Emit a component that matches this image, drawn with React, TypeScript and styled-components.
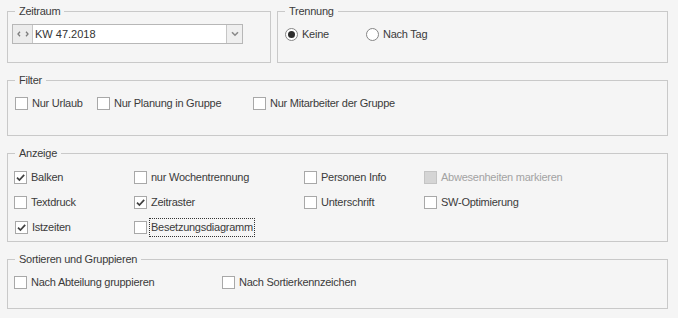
import React from "react";
import styled, { createGlobalStyle } from "styled-components";

const GlobalStyle = createGlobalStyle`
  html, body {
    margin: 0;
    background: #f5f5f5;
  }
  body {
    font-family: "Liberation Sans", Arial, sans-serif;
    font-size: 11px;
    color: #3b3b3b;
  }
`;

const Page = styled.div`
  width: 678px;
  height: 318px;
  box-sizing: border-box;
  padding: 5px 10px 0 7px;
  display: flex;
  flex-direction: column;
  gap: 11px;
`;

const TopRow = styled.div`
  display: grid;
  grid-template-columns: 264px 1fr;
  gap: 6px;
`;

const Group = styled.fieldset<{ $height: number }>`
  margin: 0;
  padding: 0;
  min-width: 0;
  border: 1px solid #c9c9c9;
  box-sizing: border-box;
  height: ${(p) => p.$height}px;
`;

const GroupTitle = styled.legend`
  margin-left: 7px;
  padding: 0 4px;
  line-height: 13px;
  font-size: 11px;
  color: #3b3b3b;
  letter-spacing: -0.25px;
`;

const GroupBody = styled.div<{ $left: number; $top: number }>`
  padding: ${(p) => p.$top}px 0 0 ${(p) => p.$left}px;
`;

const OptionGrid = styled.div<{ $columns: string }>`
  display: grid;
  grid-template-columns: ${(p) => p.$columns};
  row-gap: 5px;
`;

const Option = styled.label<{ $nudge?: number }>`
  display: flex;
  align-items: center;
  gap: 2px;
  height: 20px;
  padding-left: ${(p) => p.$nudge ?? 0}px;
`;

const Box = styled.span<{ $disabled?: boolean }>`
  flex: none;
  width: 13px;
  height: 13px;
  box-sizing: border-box;
  border: 1px solid ${(p) => (p.$disabled ? "#c4c4c4" : "#a8a8a8")};
  background: ${(p) => (p.$disabled ? "#d5d5d5" : "#ffffff")};
  display: flex;
  align-items: center;
  justify-content: center;
`;

const RadioCircle = styled.span<{ $checked?: boolean }>`
  flex: none;
  width: 13px;
  height: 13px;
  box-sizing: border-box;
  border-radius: 50%;
  border: 1px solid #858585;
  background: #ffffff;
  display: flex;
  align-items: center;
  justify-content: center;

  &::after {
    content: "";
    width: 7px;
    height: 7px;
    border-radius: 50%;
    background: ${(p) => (p.$checked ? "#2e2e2e" : "transparent")};
  }
`;

const Caption = styled.span<{ $focused?: boolean; $disabled?: boolean }>`
  border: 1px ${(p) => (p.$focused ? "dotted #333" : "solid transparent")};
  padding: 0 1px;
  line-height: 17px;
  letter-spacing: -0.25px;
  white-space: nowrap;
  color: ${(p) => (p.$disabled ? "#a3a3a3" : "#3b3b3b")};
`;

const Combo = styled.div`
  display: flex;
  width: 231px;
  height: 20px;
  box-sizing: border-box;
  border: 1px solid #b7b7b7;
  background: #ffffff;
`;

const SpinButtons = styled.div`
  width: 20px;
  box-sizing: border-box;
  background: #ececec;
  border-right: 1px solid #c6c6c6;
  display: flex;
  align-items: center;
  justify-content: center;
`;

const ComboText = styled.div`
  flex: 1;
  padding-left: 2px;
  line-height: 18px;
  font-size: 11px;
  color: #333;
`;

const DropButton = styled.div`
  width: 16px;
  box-sizing: border-box;
  background: #efefef;
  border-left: 1px solid #c6c6c6;
  display: flex;
  align-items: center;
  justify-content: center;
`;

const Check = () => (
  <svg width="11" height="11" viewBox="0 0 11 11">
    <path d="M2 5.6 L4.4 8 L9.2 2.8" fill="none" stroke="#404040" strokeWidth="1.7" />
  </svg>
);

type CheckOptionProps = {
  label: string;
  checked?: boolean;
  disabled?: boolean;
  focused?: boolean;
  nudge?: number;
};

function CheckOption({ label, checked, disabled, focused, nudge }: CheckOptionProps) {
  return (
    <Option $nudge={nudge}>
      <Box $disabled={disabled}>{checked && <Check />}</Box>
      <Caption $focused={focused} $disabled={disabled}>
        {label}
      </Caption>
    </Option>
  );
}

function RadioOption({ label, checked }: { label: string; checked?: boolean }) {
  return (
    <Option>
      <RadioCircle $checked={checked} />
      <Caption>{label}</Caption>
    </Option>
  );
}

export default function App() {
  return (
    <>
      <GlobalStyle />
      <Page>
        <TopRow>
          <Group $height={58}>
            <GroupTitle>Zeitraum</GroupTitle>
            <GroupBody $left={4} $top={6}>
              <Combo>
                <SpinButtons>
                  <svg width="12" height="6" viewBox="0 0 12 6">
                    <path d="M3 0.8 L1 3 L3 5.2 M9 0.8 L11 3 L9 5.2" fill="none" stroke="#7d7d7d" strokeWidth="1.3" />
                  </svg>
                </SpinButtons>
                <ComboText>KW 47.2018</ComboText>
                <DropButton>
                  <svg width="8" height="6" viewBox="0 0 8 6">
                    <path d="M1 1.2 L4 4.2 L7 1.2" fill="none" stroke="#8a8a8a" strokeWidth="1.6" />
                  </svg>
                </DropButton>
              </Combo>
            </GroupBody>
          </Group>
          <Group $height={58}>
            <GroupTitle>Trennung</GroupTitle>
            <GroupBody $left={7} $top={6}>
              <OptionGrid $columns="81px auto">
                <RadioOption label="Keine" checked />
                <RadioOption label="Nach Tag" />
              </OptionGrid>
            </GroupBody>
          </Group>
        </TopRow>

        <Group $height={62}>
          <GroupTitle>Filter</GroupTitle>
          <GroupBody $left={7} $top={6}>
            <OptionGrid $columns="82px 156px auto">
              <CheckOption label="Nur Urlaub" />
              <CheckOption label="Nur Planung in Gruppe" />
              <CheckOption label="Nur Mitarbeiter der Gruppe" />
            </OptionGrid>
          </GroupBody>
        </Group>

        <Group $height={95}>
          <GroupTitle>Anzeige</GroupTitle>
          <GroupBody $left={6} $top={7}>
            <OptionGrid $columns="120px 170px 120px auto">
              <CheckOption label="Balken" checked />
              <CheckOption label="nur Wochentrennung" />
              <CheckOption label="Personen Info" />
              <CheckOption label="Abwesenheiten markieren" disabled />
              <CheckOption label="Textdruck" />
              <CheckOption label="Zeitraster" checked />
              <CheckOption label="Unterschrift" />
              <CheckOption label="SW-Optimierung" />
              <CheckOption label="Istzeiten" checked nudge={1} />
              <CheckOption label="Besetzungsdiagramm" focused />
            </OptionGrid>
          </GroupBody>
        </Group>

        <Group $height={56}>
          <GroupTitle>Sortieren und Gruppieren</GroupTitle>
          <GroupBody $left={6} $top={6}>
            <OptionGrid $columns="208px auto">
              <CheckOption label="Nach Abteilung gruppieren" />
              <CheckOption label="Nach Sortierkennzeichen" />
            </OptionGrid>
          </GroupBody>
        </Group>
      </Page>
    </>
  );
}
